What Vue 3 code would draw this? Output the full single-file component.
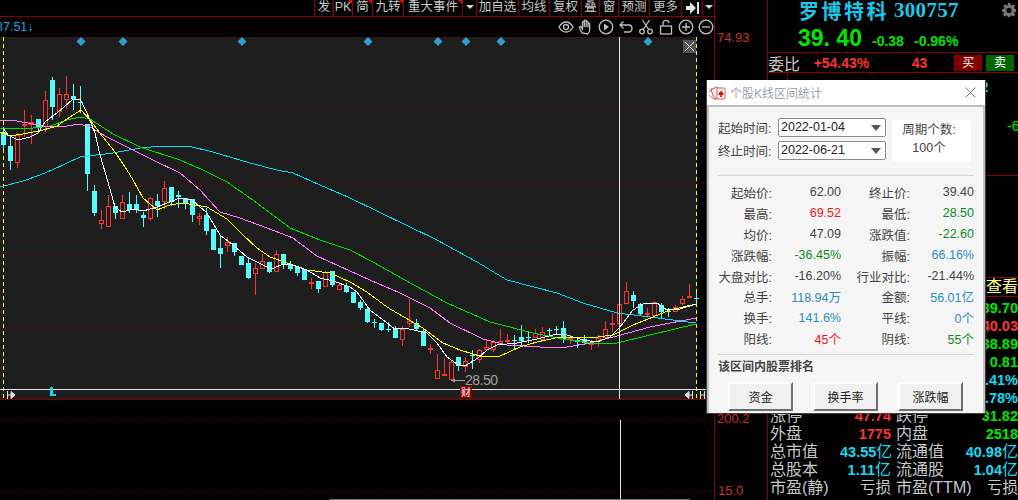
<script setup>
import { computed } from "vue";

// toolbar buttons, width in px, mark = little red corner
const toolButtons = [
  { text: "发", width: 19 },
  { text: "PK", width: 19, mark: true },
  { text: "简", width: 20, mark: true },
  { text: "九转", width: 31, mark: true },
  { text: "重大事件", width: 59, mark: true },
  { arrow: true, width: 14 },
  { text: "加自选", width: 42 },
  { text: "均线", width: 31 },
  { text: "复权", width: 32 },
  { text: "叠", width: 18 },
  { text: "窗", width: 19 },
  { text: "预测", width: 31 },
  { text: "更多", width: 32 },
  { collapse: true, width: 21 },
  { arrow: true, width: 12 },
];

const diamonds = [81, 123, 242, 368, 438, 466, 501, 648];
const gridLines = [37, 109, 182, 254, 326];

// candles: [up, wickTop, bodyTop, bodyBottom, wickBottom] starting at x=3, 7px step
const candleData = [
  [0, 127, 132, 145, 150], [0, 136, 146, 161, 170], [1, 133, 135, 162, 168], [1, 110, 124, 125, 137],
  [1, 115, 122, 124, 144], [0, 119, 119, 127, 132], [1, 91, 100, 126, 132], [0, 77, 80, 107, 120],
  [1, 88, 94, 111, 117], [1, 76, 94, 99, 109], [0, 84, 96, 99, 110], [0, 86, 102, 103, 113],
  [0, 124, 124, 174, 191], [0, 185, 191, 213, 216], [1, 210, 220, 223, 229], [1, 195, 206, 226, 226],
  [0, 206, 206, 213, 219], [1, 195, 202, 218, 218], [0, 192, 204, 210, 213], [0, 195, 204, 210, 213],
  [0, 212, 215, 218, 227], [1, 197, 198, 218, 221], [0, 194, 201, 206, 217], [1, 181, 188, 201, 209],
  [0, 187, 187, 202, 206], [0, 191, 195, 197, 208], [0, 198, 198, 203, 209], [0, 199, 199, 215, 222],
  [1, 213, 216, 218, 225], [0, 208, 215, 231, 235], [0, 229, 229, 250, 250], [0, 236, 248, 254, 268],
  [1, 237, 242, 245, 252], [0, 243, 243, 252, 256], [0, 256, 256, 265, 265], [0, 258, 263, 278, 279],
  [1, 263, 268, 273, 295], [1, 254, 261, 268, 269], [0, 262, 262, 272, 273], [1, 250, 254, 271, 271],
  [0, 254, 254, 264, 269], [0, 261, 265, 269, 271], [0, 267, 267, 273, 276], [0, 269, 269, 280, 280],
  [1, 278, 282, 283, 289], [0, 281, 281, 289, 293], [1, 271, 272, 286, 287], [0, 271, 271, 285, 287],
  [1, 282, 285, 289, 289], [0, 283, 286, 292, 293], [0, 292, 292, 303, 303], [0, 300, 302, 308, 310],
  [0, 307, 309, 322, 323], [0, 319, 322, 323, 328], [0, 323, 323, 330, 331], [0, 322, 329, 330, 332],
  [0, 326, 328, 338, 338], [1, 326, 329, 339, 346], [1, 299, 321, 323, 327], [0, 319, 323, 329, 330],
  [0, 329, 331, 346, 346], [1, 344, 348, 349, 354], [1, 354, 370, 378, 378], [1, 358, 374, 375, 375],
  [1, 361, 362, 379, 379], [0, 357, 357, 366, 371], [1, 357, 361, 366, 372], [0, 350, 355, 356, 369],
  [1, 349, 350, 359, 363], [1, 339, 347, 349, 351], [1, 340, 342, 349, 352], [1, 329, 341, 343, 345],
  [1, 334, 340, 341, 343], [0, 335, 340, 341, 350], [0, 325, 337, 341, 347], [0, 332, 337, 338, 343],
  [1, 329, 333, 337, 338], [1, 327, 332, 339, 340], [0, 328, 330, 331, 337], [0, 326, 329, 330, 335],
  [0, 321, 328, 339, 343], [1, 335, 338, 339, 344], [0, 338, 340, 342, 348], [0, 335, 339, 343, 345],
  [1, 340, 343, 344, 350], [1, 335, 338, 341, 347], [1, 321, 329, 337, 338], [1, 313, 323, 324, 332],
  [1, 303, 304, 323, 323], [1, 282, 291, 303, 303], [0, 291, 295, 301, 308], [0, 303, 304, 314, 315],
  [1, 308, 313, 314, 318], [1, 301, 302, 315, 315], [0, 303, 305, 312, 318], [0, 308, 311, 312, 317],
  [1, 305, 307, 311, 312], [1, 296, 299, 303, 305], [1, 284, 296, 297, 297], [0, 293, 298, 299, 303],
];

const candles = computed(() =>
  candleData.map(([up, high, top, bottom, low], i) => ({
    x: 3 + i * 7,
    up,
    high,
    top,
    low,
    height: Math.max(bottom - top, 1),
  }))
);

const maLines = [
  {
    color: "#00dcf0",
    points:
      "0,187 23,181 40,175 52,170 80,157 113,153 140,148 163,146 188,146 213,152 250,163 277,170 293,173 320,185 350,198 437,240 477,262 507,280 557,293 583,303 617,313 650,317 696,323",
  },
  {
    color: "#00e000",
    points:
      "0,128 33,128 50,126 67,120 80,117 90,119 113,134 140,147 180,160 203,170 227,182 253,200 290,228 320,240 350,250 373,262 403,279 447,303 490,322 533,333 563,339 590,343 617,343 650,335 696,324",
  },
  {
    color: "#ff78ff",
    points:
      "0,120 17,121 33,124 50,127 67,126 80,124 90,127 107,137 133,150 153,160 180,173 200,190 220,212 240,218 267,228 293,238 317,256 350,271 370,280 400,293 430,308 450,323 483,339 507,345 540,347 567,347 590,343 617,336 650,327 696,318",
  },
  {
    color: "#ffff00",
    points:
      "0,132 10,136 23,134 43,130 57,126 70,117 81,110 90,120 103,137 115,152 127,170 133,180 143,198 157,210 170,205 183,203 207,207 227,219 243,235 257,248 270,257 287,263 307,270 330,273 350,282 367,292 387,307 397,313 423,328 443,343 460,350 483,357 500,356 520,347 537,342 560,337 590,338 613,335 633,325 653,317 670,310 696,304",
  },
  {
    color: "#ffffff",
    points:
      "3,128 8,135 18,140 30,137 38,133 45,122 57,113 72,100 80,99 87,113 95,133 100,155 108,182 115,207 122,212 133,209 143,211 157,207 167,203 180,198 192,200 207,213 220,235 233,245 247,257 263,265 272,269 283,264 293,265 307,270 320,278 333,281 350,287 357,292 370,310 387,323 395,329 405,328 427,333 437,343 447,357 457,364 465,366 478,358 487,350 497,345 517,343 537,339 557,334 567,335 583,340 597,342 610,337 620,327 633,310 643,304 657,303 667,310 680,309 696,304",
  },
];

const stats = [
  { label: "起始价:", value: "62.00", tone: "dark", label2: "终止价:", value2: "39.40", tone2: "dark" },
  { label: "最高:", value: "69.52", tone: "red", label2: "最低:", value2: "28.50", tone2: "green" },
  { label: "均价:", value: "47.09", tone: "dark", label2: "涨跌值:", value2: "-22.60", tone2: "green" },
  { label: "涨跌幅:", value: "-36.45%", tone: "green", label2: "振幅:", value2: "66.16%", tone2: "blue" },
  { label: "大盘对比:", value: "-16.20%", tone: "dark", label2: "行业对比:", value2: "-21.44%", tone2: "dark" },
  { label: "总手:", value: "118.94万", tone: "blue", label2: "金额:", value2: "56.01亿", tone2: "blue" },
  { label: "换手:", value: "141.6%", tone: "blue", label2: "平线:", value2: "0个", tone2: "blue" },
  { label: "阳线:", value: "45个", tone: "red", label2: "阴线:", value2: "55个", tone2: "green" },
];

const quoteRows = [
  { a: "今开", av: "39.78", at: "up", b: "均价", bv: "39.70", bt: "down" },
  { a: "最高", av: "40.03", at: "up", b: "最高", bv: "40.03", bt: "up" },
  { a: "最低", av: "38.89", at: "down", b: "最低", bv: "38.89", bt: "down" },
  { a: "涨速", av: "0.10", at: "up", b: "量比", bv: "0.81", bt: "down" },
  { a: "换手", av: "1.41%", at: "cyan", b: "换手", bv: "3.41%", bt: "cyan" },
  { a: "振幅", av: "2.78%", at: "cyan", b: "振幅", bv: "2.78%", bt: "cyan" },
  { a: "涨停", av: "47.74", at: "up", b: "跌停", bv: "31.82", bt: "down" },
  { a: "外盘", av: "1775", at: "up", b: "内盘", bv: "2518", bt: "down" },
  { a: "总市值", av: "43.55", au: "亿", at: "cyan", b: "流通值", bv: "40.98", bu: "亿", bt: "cyan" },
  { a: "总股本", av: "1.11", au: "亿", at: "cyan", b: "流通股", bv: "1.04", bu: "亿", bt: "cyan" },
  { a: "市盈(静)", av: "亏损", at: "gray", b: "市盈(TTM)", bv: "亏损", bt: "gray" },
];

const rankButtons = ["资金", "换手率", "涨跌幅"];
</script>

<template>
  <div class="screen">
    <div class="left">
      <div class="toolbar">
        <div
          v-for="(btn, index) in toolButtons"
          :key="index"
          class="tool-btn"
          :class="{ marked: btn.mark }"
          :style="{ width: btn.width + 'px' }"
        >
          <i v-if="btn.arrow" class="tool-arrow"></i>
          <svg v-else-if="btn.collapse" class="tool-collapse" viewBox="0 0 13 12">
            <path d="M0 4h4V0l6 6-6 6V8H0zM11 0h2v12h-2z" fill="#e6e6e6" />
          </svg>
          <template v-else>{{ btn.text }}</template>
        </div>
      </div>

      <div class="subbar">
        <span class="last-price">87.51↓</span>
        <div class="chart-tools">
          <svg viewBox="0 0 16 16"><path d="M1 8c2-3.500 4.500-5 7-5s5 1.500 7 5c-2 3.500-4.500 5-7 5s-5-1.500-7-5z" /><circle cx="8" cy="8" r="2.500" /></svg>
          <svg viewBox="0 0 16 16"><path d="M4 14l-2.500-5c-.5-1.500 1-2 1.800-.8L4.500 10V3.500c0-1.300 1.800-1.300 1.800 0V8V2c0-1.300 1.900-1.300 1.900 0v6V3c0-1.300 1.800-1.300 1.800 0v5.500V5c0-1.200 1.700-1.200 1.700 0v5.500c0 2-.7 3.500-2 4.500z" /></svg>
          <svg viewBox="0 0 16 16"><circle cx="8" cy="8" r="6.800" /><path class="solid" d="M6 4.500l5 3.500-5 3.500z" /></svg>
          <svg viewBox="0 0 16 16"><path d="M5.500 2.500L2 6l3.500 3.500M2 6h8.500c2 0 3.500 1.500 3.500 3.500S12.500 13 10.500 13H6" /></svg>
          <svg viewBox="0 0 16 16"><circle cx="4" cy="12.500" r="2.300" /><circle cx="12" cy="12.500" r="2.300" /><path d="M5.300 10.500L11.500 1M10.700 10.500L4.500 1" /></svg>
          <svg viewBox="0 0 16 16"><rect x="2.500" y="7" width="11" height="8" /><path d="M5 7V4c0-3.500 6-3.500 6 0" /></svg>
          <svg viewBox="0 0 16 16"><circle cx="8" cy="8" r="6.800" /><path d="M4 8h8M8 4v8" /></svg>
          <svg viewBox="0 0 16 16"><circle cx="8" cy="8" r="6.800" /><path d="M4 8h8" /></svg>
        </div>
      </div>

      <!-- chart uses page coordinates, that's why the viewBox starts at y=37 -->
      <svg class="chart" viewBox="0 37 767 463" width="767" height="463" shape-rendering="crispEdges">
        <rect x="0" y="37" width="697" height="352" fill="#1e1e1e" />
        <rect x="0" y="389" width="706" height="10" fill="#1e1e1e" />
        <line
          v-for="y in gridLines"
          :key="y"
          x1="0"
          x2="714"
          :y1="y + 0.5"
          :y2="y + 0.5"
          class="dotted"
        />
        <line x1="0" x2="714" y1="420.500" y2="420.500" class="dotted" />
        <line x1="0" x2="714" y1="491.500" y2="491.500" class="dotted" />
        <line x1="3.500" x2="3.500" y1="37" y2="399" class="dash" />
        <line x1="696.500" x2="696.500" y1="37" y2="399" class="dash" />

        <g v-for="(c, i) in candles" :key="i">
          <line
            :x1="c.x + 0.5"
            :x2="c.x + 0.5"
            :y1="c.high"
            :y2="c.low"
            :stroke="c.up ? '#ff3232' : '#54fcfc'"
          />
          <rect
            v-if="c.up"
            :x="c.x - 1.500"
            :y="c.top + 0.5"
            width="4"
            :height="c.height"
            fill="#1e1e1e"
            stroke="#ff3232"
          />
          <rect v-else :x="c.x - 2" :y="c.top" width="5" :height="c.height" fill="#54fcfc" />
        </g>

        <polyline
          v-for="line in maLines"
          :key="line.color"
          :points="line.points"
          :stroke="line.color"
          fill="none"
          stroke-width="1"
        />

        <g shape-rendering="auto">
          <path
            v-for="x in diamonds"
            :key="x"
            :d="`M${x} 37l4.500 4.500L${x} 46l-4.500-4.500z`"
            fill="#2f9ccb"
          />
          <path d="M451 380.500h14" stroke="#a0a0a0" />
          <path d="M451 380.500l4-2v4z" fill="#a0a0a0" />
          <text x="465" y="385" class="low-label">28.50</text>
          <text x="717" y="42" class="scale-label">74.93</text>
          <text x="717" y="423" class="scale-label">200.2</text>
          <text x="718" y="495" class="scale-label">15.0</text>
        </g>

        <line x1="619.500" x2="619.500" y1="37" y2="399" class="cross" />
        <line x1="620.500" x2="620.500" y1="420" y2="500" class="cross" />
        <line x1="0" x2="706" y1="389.500" y2="389.500" class="cross" />
        <line x1="0" x2="714" y1="399.500" y2="399.500" stroke="#8c0000" />
        <line x1="714.500" x2="714.500" y1="37" y2="500" stroke="#8c0000" />

        <rect x="683" y="40" width="13" height="13" fill="#555" />
        <path d="M685 42l9 9M694 42l-9 9" stroke="#e0e0e0" shape-rendering="auto" />

        <g shape-rendering="auto">
          <path d="M50 387h3v7h3v2h-6z" fill="#1cd4ee" />
          <path d="M7.500 391v8M8 395h3M11 391.500l4 3.500-4 3.500z" stroke="#e0e0e0" fill="#e0e0e0" />
          <path d="M692.500 391v8M692 395h-3M689 391.500l-4 3.500 4 3.500z" stroke="#e0e0e0" fill="#e0e0e0" />
          <path d="M700.500 391v8M704.500 391v8M700.500 395h4" stroke="#e0e0e0" fill="none" />
          <rect x="460" y="386" width="12" height="12" fill="#8c0000" />
          <text x="461" y="396" class="event-label">财</text>
        </g>
        <rect x="330" y="499" width="360" height="1" fill="#7a7a7a" />
      </svg>
    </div>

    <div class="right">
      <div class="title-row">
        <span class="stock-name">罗博特科</span>
        <span class="stock-code">300757</span>
        <svg class="gear" viewBox="0 0 16 16">
          <path
            d="M6.600 0h2.800l.4 2.200 1.300.6L13 1.500l2 2-1.300 1.900.5 1.300 2.300.4v2.800l-2.300.4-.5 1.300 1.300 1.900-2 2-1.900-1.300-1.300.5-.4 2.300H6.600l-.4-2.300-1.300-.5L3 15.500l-2-2 1.300-1.900-.5-1.300L0 9.900V7.100l2.300-.4.5-1.300L1.500 3.500l2-2 1.900 1.300 1.300-.6zM8 5.500a3 3 0 1 0 0 6 3 3 0 0 0 0-6z"
            fill="#767676"
            fill-rule="evenodd"
          />
        </svg>
      </div>
      <div class="price-row">
        <span class="price">39. 40</span>
        <span class="change">-0.38</span>
        <span class="change">-0.96%</span>
      </div>
      <div class="ratio-row">
        <span class="ratio-label">委比</span>
        <span class="ratio-value">+54.43%</span>
        <span class="ratio-count">43</span>
        <span class="trade buy">买</span>
        <span class="trade sell">卖</span>
      </div>
      <div class="book">
        <div class="book-sell">
          <div class="book-head">
            <span class="book-level">卖五</span>
            <span class="book-price">39.45</span>
            <span class="book-size">12</span>
          </div>
          <span class="book-num">-6</span>
        </div>
      </div>
      <div class="view-row">查看</div>
      <div class="quotes">
        <div v-for="row in quoteRows" :key="row.a" class="quote-row">
          <span class="q-label">{{ row.a }}</span>
          <span class="q-value" :class="row.at">{{ row.av }}<small v-if="row.au">{{ row.au }}</small></span>
          <span class="q-label second">{{ row.b }}</span>
          <span class="q-value" :class="row.bt">{{ row.bv }}<small v-if="row.bu">{{ row.bu }}</small></span>
        </div>
      </div>
    </div>

    <div class="dialog">
      <div class="dialog-title">
        <svg class="cards" viewBox="0 0 17 15">
          <rect x="5" y="3" width="7" height="10" rx="1" transform="rotate(-50 8 13)" fill="#fff" stroke="#dc8282" />
          <rect x="5.500" y="2.500" width="7" height="10" rx="1" transform="rotate(-22 9 13)" fill="#fdeeee" stroke="#d25c5c" />
          <rect x="8" y="3" width="8" height="11" rx="1" fill="#fff" stroke="#d25c5c" />
          <path d="M12 5.500c.8 1.300 2.600 2.400 2.600 3.800 0 1.100-1.400 1.400-2 .6l.4 2h-2l.4-2c-.6.8-2 .5-2-.6 0-1.400 1.800-2.500 2.600-3.800z" fill="#cc1414" />
        </svg>
        <span class="dialog-name">个股K线区间统计</span>
        <svg class="dialog-close" viewBox="0 0 11 11">
          <path d="M.5.5l10 10M10.500.5l-10 10" stroke="#777" fill="none" />
        </svg>
      </div>

      <div class="dialog-body">
        <div class="range">
          <div class="range-dates">
            <div class="date-row">
              <span class="date-label">起始时间:</span>
              <div class="combo">2022-01-04<i class="combo-arrow"></i></div>
            </div>
            <div class="date-row">
              <span class="date-label">终止时间:</span>
              <div class="combo">2022-06-21<i class="combo-arrow"></i></div>
            </div>
          </div>
          <div class="period">
            <span>周期个数:</span>
            <span>100个</span>
          </div>
        </div>

        <div class="divider"></div>

        <div class="stats">
          <template v-for="item in stats" :key="item.label">
            <span class="stat-label">{{ item.label }}</span>
            <span class="stat-value" :class="item.tone">{{ item.value }}</span>
            <span class="stat-label">{{ item.label2 }}</span>
            <span class="stat-value" :class="item.tone2">{{ item.value2 }}</span>
          </template>
        </div>

        <div class="divider second"></div>

        <div class="rank-title">该区间内股票排名</div>
        <div class="rank-buttons">
          <button v-for="name in rankButtons" :key="name" class="rank-btn">{{ name }}</button>
        </div>
      </div>
    </div>
  </div>
</template>

<style scoped>
.screen {
  position: relative;
  display: flex;
  width: 1018px;
  height: 500px;
  overflow: hidden;
  background: #000;
  font-family: "Liberation Sans", "Noto Sans CJK SC", sans-serif;
}

.left {
  width: 767px;
  flex-shrink: 0;
}

.toolbar {
  display: flex;
  width: 715px;
  height: 17px;
  padding-left: 314px;
  box-sizing: border-box;
  border-bottom: 1px solid #8c0000;
  border-right: 1px solid #8c0000;
}

.tool-btn {
  position: relative;
  box-sizing: border-box;
  border-left: 1px solid #8c0000;
  color: #c8c8c8;
  font-size: 12.500px;
  line-height: 15px;
  text-align: center;
  white-space: nowrap;
}

.tool-btn.marked::after {
  content: "";
  position: absolute;
  top: 0;
  right: 0;
  border-top: 4px solid #e01010;
  border-left: 4px solid transparent;
}

.tool-arrow {
  display: inline-block;
  vertical-align: 2px;
  border-top: 4px solid #d8d8d8;
  border-left: 4px solid transparent;
  border-right: 4px solid transparent;
}

.tool-collapse {
  width: 13px;
  height: 12px;
  margin-top: 2px;
}

.subbar {
  display: flex;
  align-items: center;
  justify-content: space-between;
  width: 715px;
  height: 20px;
  box-sizing: border-box;
  overflow: hidden;
  border-right: 1px solid #8c0000;
}

.last-price {
  margin-left: -4px;
  color: #14a8dc;
  font-size: 12.500px;
}

.chart-tools {
  display: flex;
  gap: 4px;
}

.chart-tools svg {
  width: 16px;
  height: 16px;
  fill: none;
  stroke: #c0c0c0;
  stroke-width: 1.300;
}

.chart-tools .solid {
  fill: #c0c0c0;
  stroke: none;
}

.chart {
  display: block;
  overflow: visible;
}

.dotted {
  stroke: #7a0000;
  stroke-dasharray: 1 2;
}

.dash {
  stroke: #ffff00;
  stroke-dasharray: 4 3;
}

.cross {
  stroke: #e4e4e4;
}

.low-label {
  fill: #a0a0a0;
  font-size: 14px;
  letter-spacing: -0.5px;
}

.scale-label {
  fill: #c83232;
  font-size: 13px;
}

.event-label {
  fill: #fff;
  font-size: 10px;
}

.right {
  flex: 1;
  min-width: 0;
  border-left: 1px solid #8c0000;
}

.title-row {
  display: flex;
  align-items: center;
  height: 20px;
  padding-left: 31px;
  color: #1cc8ea;
  font-weight: bold;
}

.stock-name {
  font-family: "Noto Sans CJK SC", sans-serif;
  font-size: 20px;
  letter-spacing: 2.500px;
}

.stock-code {
  margin-left: 5px;
  font-family: "Liberation Serif", serif;
  font-size: 21px;
  letter-spacing: 0.3px;
}

.gear {
  width: 14px;
  height: 14px;
  margin-left: auto;
  margin-right: 2px;
}

.price-row {
  display: flex;
  align-items: baseline;
  height: 33px;
  padding-left: 30px;
  box-sizing: border-box;
  padding-top: 5px;
  color: #00e600;
  border-bottom: 1px solid #8c0000;
}

.price {
  width: 74px;
  font-size: 23px;
  font-weight: bold;
  white-space: pre;
}

.change {
  width: 42px;
  font-size: 14px;
  font-weight: bold;
}

.ratio-row {
  display: flex;
  align-items: center;
  height: 19px;
  font-weight: bold;
  border-bottom: 1px solid #8c0000;
}

.ratio-label {
  width: 46px;
  color: #c8c8c8;
  font-size: 16px;
  font-weight: normal;
}

.ratio-value {
  width: 99px;
  color: #ff3232;
  font-size: 14px;
}

.ratio-count {
  width: 43px;
  color: #ff3232;
  font-size: 14px;
}

.trade {
  width: 28px;
  height: 16px;
  margin-right: 4px;
  color: #fff;
  font-size: 12px;
  font-weight: normal;
  line-height: 16px;
  text-align: center;
}

.buy {
  background: #800000;
}

.sell {
  background: #006400;
}

.book {
  height: 204px;
  border-bottom: 1px solid #8c0000;
}

.book-sell {
  height: 103px;
  box-sizing: border-box;
  overflow: hidden;
  border-bottom: 1px solid #8c0000;
}

/* first price row, only its top edge peeks out above the dialog */
.book-head {
  display: flex;
  height: 7px;
  margin-left: 19px;
  padding: 5px 0 0 2px;
  box-sizing: border-box;
  border-left: 1px solid #8c0000;
  font-size: 14px;
  font-weight: bold;
  line-height: 18px;
}

.book-level {
  width: 70px;
  color: #c8c8c8;
}

.book-price {
  width: 113px;
  color: #00e600;
}

.book-size {
  color: #14dcf5;
}

.book-num {
  display: block;
  margin: 37px 0 0 239px;
  color: #00e600;
  font-size: 14px;
  line-height: 18px;
  white-space: nowrap;
}

.view-row {
  height: 18px;
  border-bottom: 1px solid #8c0000;
  color: #ffff80;
  font-size: 16px;
  line-height: 18px;
  text-align: right;
}

.quotes {
  padding-top: 2px;
}

.quote-row {
  display: grid;
  grid-template-columns: 70px 51px 69px 58px;
  height: 18px;
  padding-left: 2px;
  font-size: 16px;
  line-height: 18px;
  white-space: nowrap;
}

.q-label {
  color: #c8c8c8;
}

.q-label.second {
  margin-left: 5px;
}

.q-value {
  font-size: 14.500px;
  font-weight: bold;
  text-align: right;
}

.q-value small {
  font-size: 16px;
  font-weight: normal;
}

.q-value.up {
  color: #ff3232;
}

.q-value.down {
  color: #00e600;
}

.q-value.cyan {
  color: #14dcf5;
}

.q-value.gray {
  color: #c8c8c8;
  font-weight: normal;
  font-size: 15.500px;
}

.dialog {
  position: absolute;
  left: 706px;
  top: 80px;
  width: 280px;
  height: 334px;
  box-sizing: border-box;
  border: 1px solid #404040;
  border-top: none;
  background: #fff;
  color: #444;
  font-size: 13px;
}

.dialog-title {
  display: flex;
  align-items: center;
  height: 25px;
  padding: 0 9px 0 2px;
}

.cards {
  width: 17px;
  height: 15px;
  margin-right: 4px;
}

.dialog-name {
  color: #9aa3ac;
  font-size: 12px;
}

.dialog-close {
  width: 11px;
  height: 11px;
  margin-left: auto;
}

.dialog-body {
  height: 308px;
  padding: 11px 9px 0 9px;
  box-sizing: border-box;
  border: 2px solid #c0c0c0;
  border-bottom: none;
  background: #f5f5f5;
}

.range {
  display: flex;
  height: 45px;
}

.range-dates {
  display: flex;
  flex-direction: column;
  gap: 4px;
}

.date-row {
  display: flex;
  align-items: center;
  width: 168px;
  justify-content: space-between;
}

.date-label {
  font-size: 12.500px;
}

.combo {
  position: relative;
  width: 108px;
  height: 19px;
  padding-left: 2px;
  box-sizing: border-box;
  border: 1px solid #8c8c8c;
  border-radius: 2px;
  background: #fff;
  color: #222;
  font-size: 12.500px;
  line-height: 17px;
}

.combo-arrow {
  position: absolute;
  top: 6px;
  right: 4px;
  border-top: 6px solid #555;
  border-left: 5px solid transparent;
  border-right: 5px solid transparent;
}

.period {
  display: flex;
  flex-direction: column;
  gap: 2px;
  align-items: center;
  width: 79px;
  height: 42px;
  margin: 2px 0 0 6px;
  padding: 2px 5px 0 0;
  box-sizing: border-box;
  border-radius: 3px;
  background: #fff;
  font-size: 12.500px;
  line-height: 16px;
  white-space: nowrap;
}

.divider {
  height: 1px;
  margin-top: 12px;
  background: #d6d6d6;
}

.divider.second {
  margin-top: 5px;
}

.stats {
  display: grid;
  grid-template-columns: 54px 69px 69px 64px;
  grid-auto-rows: 20.900px;
  margin-top: 6px;
  align-items: center;
}

.stat-label {
  font-size: 12.500px;
  text-align: right;
  white-space: nowrap;
}

.stat-value {
  font-size: 12.500px;
  text-align: right;
  white-space: nowrap;
}

.dark {
  color: #444;
}

.red {
  color: #f01414;
}

.green {
  color: #0a8c1e;
}

.blue {
  color: #2a8fc0;
}

.rank-title {
  margin-top: 4px;
  font-size: 12px;
  font-weight: bold;
  line-height: 16px;
}

.rank-buttons {
  display: flex;
  gap: 20px;
  margin: 7px 0 0 10px;
}

.rank-btn {
  width: 65px;
  height: 29px;
  padding: 0;
  box-sizing: border-box;
  border: 2px solid;
  border-color: #fff #6e6e6e #6e6e6e #fff;
  background: #f0f0f0;
  color: #222;
  font-family: "Liberation Sans", "Noto Sans CJK SC", sans-serif;
  font-size: 12px;
}
</style>
